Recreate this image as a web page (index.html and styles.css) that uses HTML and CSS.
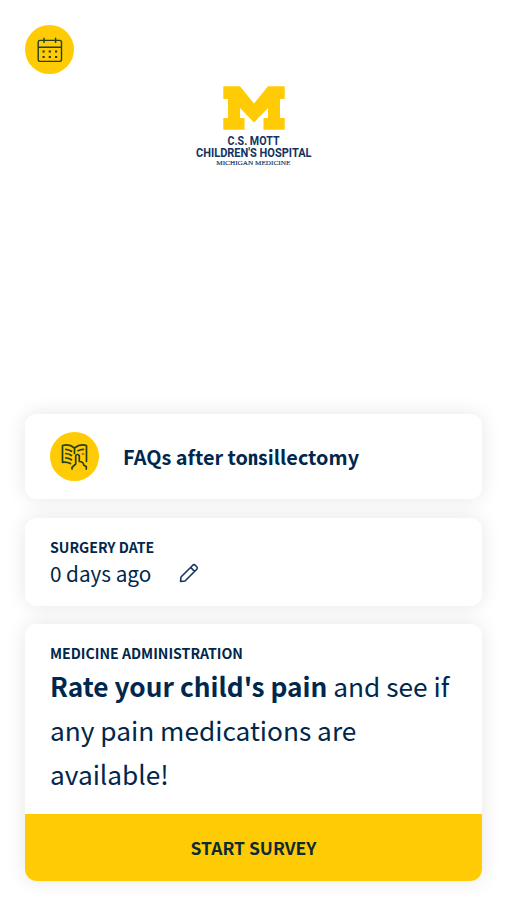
FILE: index.html
```html
<!DOCTYPE html>
<html lang="en">
<head>
<meta charset="utf-8">
<title>C.S. Mott Children's Hospital</title>
<link rel="stylesheet" href="styles.css">
</head>
<body>
<main class="screen">
  <header class="header">
    <button class="round" aria-label="Calendar">
      <svg width="49" height="49" viewBox="0 0 49 49" fill="none" stroke="#24401f" stroke-width="1.4" stroke-linecap="round">
        <rect x="13.2" y="15.4" width="23.3" height="21" rx="1.8"/>
        <path d="M13.5 22.3H36.2M19 13.2v4.2M30.6 13.2v4.2"/>
        <path stroke-width="2" stroke-linecap="butt" d="M17.5 26.6h2.2M23.7 26.6h2.2M30 26.6h2.2M17.5 31.9h2.2M23.7 31.9h2.2M30 31.9h2.2"/>
      </svg>
    </button>
    <svg class="logo" width="140" height="90" viewBox="-9.500 0 140 90">
      <path fill="#ffcb05" d="M29.800 1.300H46.500L60.500 18.500L74.500 1.300H91.200V14H86.500V33H91.200V44.700H70V33H74.500V23L60.500 37.500L46.500 23V33H51V44.700H29.800V33H34.500V14H29.800Z"/>
      <text class="logo-name" x="34" y="60" textLength="52" lengthAdjust="spacingAndGlyphs">C.S. MOTT</text>
      <text class="logo-name" x="2.500" y="71.800" textLength="115.500" lengthAdjust="spacingAndGlyphs">CHILDREN'S HOSPITAL</text>
      <text class="logo-sub" x="22.800" y="80.300" textLength="74" lengthAdjust="spacingAndGlyphs">MICHIGAN MEDICINE</text>
    </svg>
  </header>
  <section class="cards">
    <article class="card faq">
      <span class="round">
        <svg width="49" height="49" viewBox="0 0 49 49" fill="none" stroke="#24401f" stroke-width="1.700" stroke-linecap="round" stroke-linejoin="round">
          <path d="M20.500 31.500Q16.500 29.500 12.500 30.300V13.500Q19 11.300 24.500 16Q30 11.300 36.500 13.500V29.500M24.500 16V21.500"/>
          <path d="M15.800 17.300Q19 17.500 21.500 19.300M15.800 21.500Q19 21.700 21.500 23.500M15.800 25.800Q19 26 21.500 27.800M28 18.700Q30.500 17.300 33.500 17.300"/>
          <path d="M22 37V35.300L25.700 32V24.500Q25.800 22.500 27.500 22.500T29.300 24.500V29.500Q33.500 29.700 33.800 33.300L36.300 34.500V37"/>
          <path stroke="#b94a13" d="M32.500 22h1"/>
        </svg>
      </span>
      <h2 class="faq-title">FAQs after tonsillectomy</h2>
    </article>
    <article class="card surgery">
      <h3 class="label">SURGERY DATE</h3>
      <div class="date-row">
        <span class="date">0 days ago</span>
        <svg width="22" height="22" viewBox="0 0 22 22" fill="none" stroke="#17365f" stroke-width="1.600" stroke-linejoin="round">
          <path d="M2.500 19.500L3 15L14.800 3.200Q16 2.100 17.200 3.200L18.800 4.800Q19.900 6 18.800 7.200L7 19ZM12.600 5.400L16.600 9.400"/>
        </svg>
      </div>
    </article>
    <article class="card medicine">
      <div class="medicine-body">
        <h3 class="label">MEDICINE ADMINISTRATION</h3>
        <p class="message"><strong>Rate your child's pain</strong> and see if any pain medications are available!</p>
      </div>
      <button class="start">START SURVEY</button>
    </article>
  </section>
</main>
</body>
</html>
```
FILE: styles.css
```css
* { box-sizing: border-box; }
body {
  margin: 0;
  background: #fff;
  color: #00274c;
  font-family: "Noto Sans CJK SC", "Noto Sans", sans-serif;
}
h2, h3, p { margin: 0; }
button { border: 0; padding: 0; font: inherit; color: inherit; }
svg { display: block; flex: none; }
.screen {
  height: 900px;
  padding: 25px 25px 19px;
  display: flex;
  flex-direction: column;
  justify-content: space-between;
}
.header { display: flex; flex-direction: column; align-items: flex-start; }
.round {
  width: 49px;
  height: 49px;
  border-radius: 50%;
  background: #ffcb05;
  flex: none;
}
.logo { align-self: center; margin-top: 11px; }
.logo-name {
  font: bold 12.3px Roboto, sans-serif;
  fill: #12345f;
}
.logo-sub { font: 7px "Liberation Serif", serif; fill: #12345f; stroke: #12345f; stroke-width: .15px; }
.cards { display: flex; flex-direction: column; gap: 19px; isolation: isolate; }
.card { position: relative; border-radius: 12px; background: #fff; }
.card::before {
  content: "";
  position: absolute;
  inset: 0;
  z-index: -1;
  border-radius: 12px;
  box-shadow: 0 0 20px rgba(0, 0, 0, .1);
}
.faq { height: 85px; padding: 0 25px; display: flex; align-items: center; gap: 24px; }
.faq-title { font-size: 19.85px; line-height: 30px; font-weight: 700; font-feature-settings: "liga" 1, "dlig" 1; }
.surgery { height: 88px; padding: 19px 25px 0; }
.label { font-size: 14.15px; line-height: 20px; font-weight: 700; }
.date-row { display: flex; align-items: center; gap: 27px; height: 32px; }
.date { font-size: 20.7px; line-height: 32px; }
.medicine { margin-top: -1px; height: 257px; display: flex; flex-direction: column; }
.medicine-body { flex: 1; padding: 19px 25px 0; }
.message { margin-top: 1px; font-size: 26.25px; line-height: 44px; }
.start {
  height: 67px;
  background: #ffcb05;
  border-radius: 0 0 12px 12px;
  font-size: 17.5px;
  font-weight: 700;
  color: #0d2b35;
}
```
